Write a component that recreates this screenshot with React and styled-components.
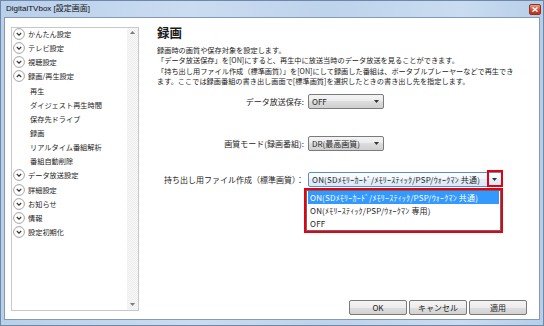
import React from "react";
import styled, { createGlobalStyle } from "styled-components";

const GlobalStyle = createGlobalStyle`
  html, body { margin: 0; padding: 0; background: #fff; }
  body { font-family: "Noto Sans CJK JP", "Noto Sans", sans-serif; color: #1e1e1e; }
`;

const Window = styled.div`
  width: 544px;
  height: 326px;
  box-sizing: border-box;
  display: flex;
  flex-direction: column;
  border: 1px solid #7088a8;
  padding: 0 3px 5px 3px;
  background: linear-gradient(90deg, #b9d0eb, #cadcf1 35%, #bed3ec 60%, #c9dcf1 85%, #b7cee9);
`;

const TitleBar = styled.div`
  height: 16px;
  display: flex;
  align-items: flex-start;
  justify-content: space-between;
`;

const TitleText = styled.span`
  font-size: 8px;
  line-height: 15px;
  padding-left: 2px;
  color: #101010;
  font-family: "Liberation Sans", "Noto Sans CJK JP", sans-serif;
`;

const CloseBtn = styled.div`
  width: 12px;
  height: 11px;
  margin-top: 3px;
  margin-right: -1px;
  box-sizing: border-box;
  border: 1px solid #8a3426;
  border-radius: 2px;
  background: linear-gradient(#e8a08c, #d0553d 50%, #c0301a);
  display: flex;
  align-items: center;
  justify-content: center;
`;

const Client = styled.div`
  flex: 1;
  display: flex;
  background: #fff;
  border: 1px solid #8898ae;
  padding: 9px 12px 4px 6px;
  min-height: 0;
`;

const TreeBox = styled.div`
  width: 128px;
  height: 284px;
  box-sizing: border-box;
  border: 1px solid #c9c9c9;
  display: flex;
  flex-shrink: 0;
`;

const TreeList = styled.div`
  flex: 1;
  margin-top: -1px;
`;

const TreeItem = styled.div`
  height: 14.15px;
  display: flex;
  align-items: center;
  font-size: 7.2px;
  white-space: nowrap;
  padding-left: ${(p) => (p.$sub ? "18px" : "1px")};
  gap: 3px;
  color: #1c1c1c;
`;

const ScrollBar = styled.div`
  width: 11px;
  display: flex;
  flex-direction: column;
  justify-content: space-between;
  align-items: center;
  padding: 3px 0 4px;
  background: repeating-conic-gradient(#ececec 0 25%, #f9f9f9 0 50%) 0 0 / 2px 2px;
`;

const Right = styled.div`
  flex: 1;
  margin-left: 18px;
  display: flex;
  flex-direction: column;
  min-width: 0;
`;

const Heading = styled.div`
  font-size: 12.5px;
  font-weight: 700;
  line-height: 13px;
  margin-top: -1px;
  color: #1a1a1a;
`;

const Desc = styled.div`
  margin-top: 6px;
  font-size: 7.2px;
  line-height: 10.3px;
  white-space: nowrap;
  color: #1c1c1c;
`;

const Row = styled.div`
  display: grid;
  grid-template-columns: 147px auto;
  column-gap: 4px;
  align-items: center;
  margin-top: ${(p) => p.$gap}px;
`;

const Label = styled.span`
  font-size: 8px;
  text-align: right;
  white-space: nowrap;
  color: #1c1c1c;
`;

const SelectWrap = styled.div`
  position: relative;
  width: ${(p) => p.$w}px;
`;

const Select = styled.div`
  height: 15px;
  box-sizing: border-box;
  display: flex;
  align-items: center;
  border: 1px solid ${(p) => (p.$focus ? "#5b8fc4" : "#7b7b7b")};
  border-radius: 2px;
  background: ${(p) =>
    p.$focus
      ? "linear-gradient(#fdfeff, #f1f7fd 50%, #e4eef9 50%, #dce9f7)"
      : "linear-gradient(#f4f4f4, #ebebeb 50%, #dddddd 50%, #cfcfcf)"};
  font-size: 8px;
  white-space: nowrap;
`;

const SelectText = styled.span`
  flex: 1;
  padding-left: 3px;
  overflow: hidden;
  letter-spacing: ${(p) => (p.$wide ? "0.2px" : "0")};
`;

const Arrow = styled.span`
  width: 13px;
  display: flex;
  justify-content: center;
`;

const RedBox = styled.div`
  position: absolute;
  box-sizing: border-box;
  border: 2px solid #e60012;
`;

const ArrowMark = styled(RedBox)`
  top: -2px;
  right: -1px;
  width: 16px;
  height: 17px;
`;

const DropFrame = styled(RedBox)`
  top: 16px;
  left: -4px;
  width: 199px;
  height: 45px;
  z-index: 2;
`;

const DropList = styled.div`
  height: 100%;
  box-sizing: border-box;
  border: 1px solid #6a6a6a;
  background: #fff;
  padding: 0 1px;
`;

const Option = styled.div`
  height: 13px;
  display: flex;
  align-items: center;
  padding-left: 2px;
  font-size: 8px;
  letter-spacing: 0.2px;
  white-space: nowrap;
  background: ${(p) => (p.$active ? "#3399ff" : "transparent")};
  color: ${(p) => (p.$active ? "#fff" : "#1c1c1c")};
`;

const ButtonBar = styled.div`
  margin-top: auto;
  display: flex;
  justify-content: flex-end;
  gap: 2px;
`;

const Button = styled.div`
  width: 58px;
  height: 15px;
  box-sizing: border-box;
  border: 1px solid #7a7a7a;
  border-radius: 2px;
  background: linear-gradient(#f4f4f4, #ececec 50%, #dedede 50%, #d2d2d2);
  display: flex;
  align-items: center;
  justify-content: center;
  font-size: 8px;
  color: #1c1c1c;
`;

const Tri = ({ up, color = "#333" }) => (
  <svg width="5" height="3" viewBox="0 0 5 3">
    <path d={up ? "M0 3 L2.5 0 L5 3 Z" : "M0 0 L5 0 L2.5 3 Z"} fill={color} />
  </svg>
);

const Chevron = ({ up }) => (
  <svg width="12" height="12" viewBox="0 0 12 12">
    <circle cx="6" cy="6" r="5.4" fill="#fff" stroke="#9b9b9b" strokeWidth="0.9" />
    <path
      d={up ? "M3.8 7 L6 4.8 L8.2 7" : "M3.8 5 L6 7.2 L8.2 5"}
      fill="none"
      stroke="#333"
      strokeWidth="1.1"
    />
  </svg>
);

const tree = [
  { label: "かんたん設定" },
  { label: "テレビ設定" },
  { label: "視聴設定" },
  { label: "録画/再生設定", open: true },
  { label: "再生", sub: true },
  { label: "ダイジェスト再生時間", sub: true },
  { label: "保存先ドライブ", sub: true },
  { label: "録画", sub: true },
  { label: "リアルタイム番組解析", sub: true },
  { label: "番組自動削除", sub: true },
  { label: "データ放送設定" },
  { label: "詳細設定" },
  { label: "お知らせ" },
  { label: "情報" },
  { label: "設定初期化" },
];

const longOn = "ON(SDﾒﾓﾘｰｶｰﾄﾞ/ﾒﾓﾘｰｽﾃｨｯｸ/PSP/ｳｫｰｸﾏﾝ 共通)";

export default function App() {
  return (
    <Window>
      <GlobalStyle />
      <TitleBar>
        <TitleText>DigitalTVbox [設定画面]</TitleText>
        <CloseBtn>
          <svg width="6" height="5" viewBox="0 0 6 5">
            <path d="M0.5 0.5 L5.5 4.5 M5.5 0.5 L0.5 4.5" stroke="#fff" strokeWidth="1.4" />
          </svg>
        </CloseBtn>
      </TitleBar>
      <Client>
        <TreeBox>
          <TreeList>
            {tree.map((t) => (
              <TreeItem key={t.label} $sub={t.sub}>
                {!t.sub && <Chevron up={t.open} />}
                {t.label}
              </TreeItem>
            ))}
          </TreeList>
          <ScrollBar>
            <Tri up color="#7a7a7a" />
            <Tri color="#7a7a7a" />
          </ScrollBar>
        </TreeBox>
        <Right>
          <Heading>録画</Heading>
          <Desc>
            録画時の画質や保存対象を設定します。
            <br />
            「データ放送保存」を[ON]にすると、再生中に放送当時のデータ放送を見ることができます。
            <br />
            「持ち出し用ファイル作成（標準画質）」を[ON]にして録画した番組は、ポータブルプレーヤーなどで再生でき
            <br />
            ます。ここでは録画番組の書き出し画面で[標準画質]を選択したときの書き出し先を指定します。
          </Desc>
          <Row $gap={8}>
            <Label>データ放送保存:</Label>
            <SelectWrap $w={76}>
              <Select>
                <SelectText>OFF</SelectText>
                <Arrow>
                  <Tri />
                </Arrow>
              </Select>
            </SelectWrap>
          </Row>
          <Row $gap={27}>
            <Label>画質モード(録画番組):</Label>
            <SelectWrap $w={76}>
              <Select>
                <SelectText>DR(最高画質)</SelectText>
                <Arrow>
                  <Tri />
                </Arrow>
              </Select>
            </SelectWrap>
          </Row>
          <Row $gap={21}>
            <Label>持ち出し用ファイル作成（標準画質）：</Label>
            <SelectWrap $w={194}>
              <Select $focus>
                <SelectText $wide>{longOn}</SelectText>
                <Arrow>
                  <Tri />
                </Arrow>
              </Select>
              <ArrowMark />
              <DropFrame>
                <DropList>
                  <Option $active>{longOn}</Option>
                  <Option>ON(ﾒﾓﾘｰｽﾃｨｯｸ/PSP/ｳｫｰｸﾏﾝ 専用)</Option>
                  <Option>OFF</Option>
                </DropList>
              </DropFrame>
            </SelectWrap>
          </Row>
          <ButtonBar>
            <Button>OK</Button>
            <Button>キャンセル</Button>
            <Button>適用</Button>
          </ButtonBar>
        </Right>
      </Client>
    </Window>
  );
}
